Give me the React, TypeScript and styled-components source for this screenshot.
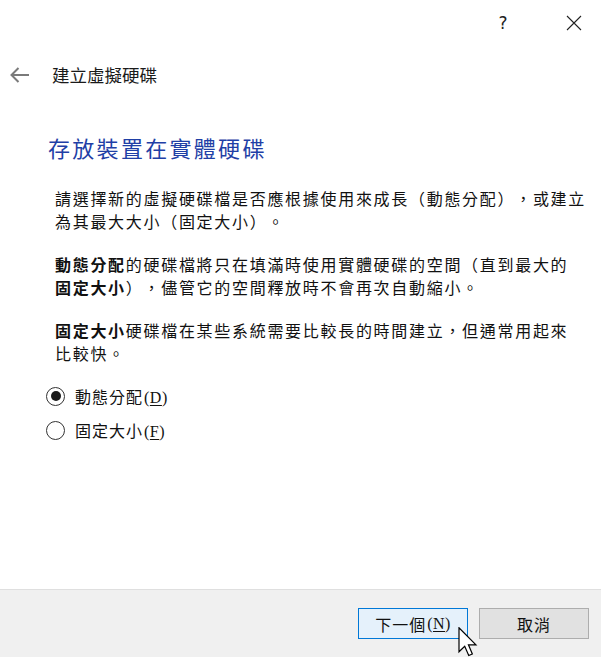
import React from "react";
import styled, { createGlobalStyle } from "styled-components";

const Global = createGlobalStyle`
  html, body { margin: 0; padding: 0; background: #ffffff; }
  body { width: 601px; height: 657px; overflow: hidden; }
  #root { width: 601px; height: 657px; }
  * { text-spacing-trim: space-all; }
`;

const CJK = `"Noto Sans CJK TC", "Noto Sans", sans-serif`;

const Window = styled.div`
  position: relative;
  width: 601px;
  height: 657px;
  display: flex;
  flex-direction: column;
  background: #ffffff;
  font-family: ${CJK};
  color: #000;
`;

const TitleBar = styled.div`
  height: 45px;
  display: flex;
  justify-content: flex-end;
  align-items: center;
  gap: 20px;
`;

const CaptionButton = styled.div<{ $w: number }>`
  width: ${(p) => p.$w}px;
  height: 45px;
  display: flex;
  align-items: center;
  justify-content: center;
  font-family: "DejaVu Sans", "Liberation Sans", sans-serif;
  font-size: 17px;
  color: #222;
`;

const HeaderRow = styled.div`
  height: 30px;
  margin-top: 15px;
  display: flex;
  align-items: center;
  padding-left: 10px;
  gap: 22px;
`;

const HeaderTitle = styled.div`
  font-size: 17.5px;
  line-height: 30px;
  color: #1a1a1a;
`;

const Heading = styled.h1`
  margin: 44px 0 0 48px;
  font-weight: 400;
  font-size: 22px;
  line-height: 26px;
  letter-spacing: 2.3px;
  color: #1f3fa6;
`;

const Body = styled.div`
  margin: 27px 0 0 55px;
  display: flex;
  flex-direction: column;
  gap: 20px;
`;

const Para = styled.p`
  margin: 0;
  font-size: 16px;
  line-height: 23px;
  letter-spacing: 1.7px;
  white-space: nowrap;
  color: #111;
  b { font-weight: 700; }
`;

const RadioGroup = styled.div`
  margin: 20px 0 0 46px;
  display: flex;
  flex-direction: column;
  gap: 12px;
`;

const RadioRow = styled.label`
  display: flex;
  align-items: center;
  gap: 10px;
  height: 22px;
  font-size: 16px;
  letter-spacing: 1px;
  color: #111;
`;

const RadioCircle = styled.span<{ $checked?: boolean }>`
  width: 17px;
  height: 17px;
  border: 1px solid #333;
  border-radius: 50%;
  display: flex;
  align-items: center;
  justify-content: center;
  &::after {
    content: "";
    width: 10px;
    height: 10px;
    border-radius: 50%;
    background: ${(p) => (p.$checked ? "#1a1a1a" : "transparent")};
  }
`;

const Mnemonic = styled.span`
  letter-spacing: 0.5px;
  margin-left: 1px;
  font-family: "Liberation Serif", serif;
  u { text-decoration-thickness: 1px; text-underline-offset: 2px; }
`;

const Footer = styled.div`
  margin-top: auto;
  height: 68px;
  border-top: 1px solid #dfdfdf;
  background: #f0f0f0;
  display: flex;
  justify-content: flex-end;
  align-items: flex-start;
  padding: 18px 12px 0 0;
  gap: 11px;
  box-sizing: border-box;
`;

const Button = styled.div<{ $primary?: boolean }>`
  width: 110px;
  height: 31px;
  box-sizing: border-box;
  display: flex;
  align-items: center;
  justify-content: center;
  font-size: 16px;
  letter-spacing: 1px;
  color: #111;
  border: 1px solid ${(p) => (p.$primary ? "#0078d7" : "#adadad")};
  background: ${(p) => (p.$primary ? "#e5f1fb" : "#e1e1e1")};
`;

const Cursor = styled.svg`
  position: absolute;
  left: 458px;
  top: 627px;
`;

export default function App() {
  return (
    <>
      <Global />
      <Window>
        <TitleBar>
          <CaptionButton $w={46}>?</CaptionButton>
          <CaptionButton $w={55}>
            <svg width="16" height="16" viewBox="0 0 16 16">
              <path d="M1 1 L15 15 M15 1 L1 15" stroke="#222" strokeWidth="1.1" fill="none" />
            </svg>
          </CaptionButton>
        </TitleBar>
        <HeaderRow>
          <svg width="20" height="16" viewBox="0 0 20 16">
            <path d="M1.5 8 H19 M8.5 1 L1.5 8 L8.5 15" stroke="#7a7a7a" strokeWidth="2" fill="none" />
          </svg>
          <HeaderTitle>建立虛擬硬碟</HeaderTitle>
        </HeaderRow>
        <Heading>存放裝置在實體硬碟</Heading>
        <Body>
          <Para>
            請選擇新的虛擬硬碟檔是否應根據使用來成長（動態分配），或建立
            <br />
            為其最大大小（固定大小）。
          </Para>
          <Para>
            <b>動態分配</b>的硬碟檔將只在填滿時使用實體硬碟的空間（直到最大的
            <br />
            <b>固定大小</b>），儘管它的空間釋放時不會再次自動縮小。
          </Para>
          <Para>
            <b>固定大小</b>硬碟檔在某些系統需要比較長的時間建立，但通常用起來
            <br />
            比較快。
          </Para>
        </Body>
        <RadioGroup>
          <RadioRow>
            <RadioCircle $checked />
            <span>
              動態分配<Mnemonic>(<u>D</u>)</Mnemonic>
            </span>
          </RadioRow>
          <RadioRow>
            <RadioCircle />
            <span>
              固定大小<Mnemonic>(<u>F</u>)</Mnemonic>
            </span>
          </RadioRow>
        </RadioGroup>
        <Footer>
          <Button $primary>
            下一個<Mnemonic>(<u>N</u>)</Mnemonic>
          </Button>
          <Button>取消</Button>
        </Footer>
        <Cursor width="20" height="30" viewBox="0 0 13 20">
          <path
            d="M0.5 0.5 L0.5 16.5 L4.3 12.8 L7 19 L9.4 18 L6.8 11.9 L11.8 11.9 Z"
            fill="#ffffff"
            stroke="#000000"
            strokeWidth="0.8"
            strokeLinejoin="miter"
          />
        </Cursor>
      </Window>
    </>
  );
}
